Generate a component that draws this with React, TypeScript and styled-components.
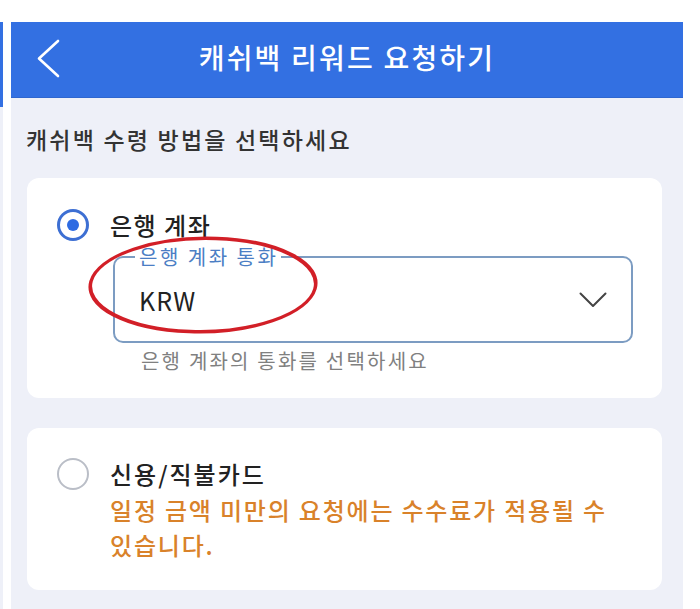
import * as React from "react";
import styled, { createGlobalStyle } from "styled-components";

const GlobalStyle = createGlobalStyle`
  html, body {
    margin: 0;
    padding: 0;
    background: #ffffff;
    overflow: hidden;
  }
  body {
    font-family: "Noto Sans CJK KR", "Noto Sans", sans-serif;
  }
`;

const Page = styled.div`
  display: flex;
  gap: 8px;
  padding-top: 22px;
  height: 609px;
  box-sizing: border-box;
`;

const Strip = styled.div`
  display: flex;
  flex-direction: column;
  width: 3px;
  background: #eef0f8;
`;

const StripTop = styled.div`
  height: 85px;
  background: #3370e2;
`;

const Panel = styled.div`
  display: flex;
  flex-direction: column;
  width: 672px;
  background: #eef0f8;
`;

const Header = styled.header`
  display: grid;
  grid-template-columns: 1fr auto 1fr;
  align-items: center;
  height: 76px;
  padding-bottom: 6px;
  box-sizing: border-box;
  background: #3370e2;
  border-bottom: 1px solid #2f66cf;
`;

const BackButton = styled.div`
  display: flex;
  align-items: center;
  padding-left: 26px;
  padding-top: 4px;
`;

const Title = styled.h1`
  margin: 0;
  color: #ffffff;
  font-size: 28px;
  font-weight: 500;
  line-height: 36px;
  letter-spacing: 2.2px;
`;

const Body = styled.div`
  display: flex;
  flex-direction: column;
  padding: 25px 21px 0 16px;
`;

const Subtitle = styled.div`
  color: #333333;
  font-size: 23px;
  font-weight: 500;
  line-height: 32px;
  letter-spacing: 2.2px;
  margin-bottom: 23px;
  margin-left: -1px;
`;

const Card = styled.div<{ $gap?: number }>`
  position: relative;
  display: grid;
  grid-template-columns: 32px 1fr;
  column-gap: 21px;
  background: #ffffff;
  border-radius: 12px;
  margin-bottom: ${(p) => p.$gap ?? 0}px;
`;

const CardOne = styled(Card)`
  padding: 30px 29px 23px 30px;
`;

const CardTwo = styled(Card)`
  padding: 28px 29px 28px 30px;
`;

const RadioCell = styled.div<{ $row: number }>`
  display: flex;
  align-items: center;
  height: ${(p) => p.$row}px;
`;

const Radio = styled.span<{ $checked?: boolean }>`
  display: flex;
  align-items: center;
  justify-content: center;
  width: 32px;
  height: 32px;
  box-sizing: border-box;
  border-radius: 50%;
  border: ${(p) => (p.$checked ? "3.5px solid #3d6fd3" : "2.5px solid #babec7")};
  &::after {
    content: "";
    display: ${(p) => (p.$checked ? "block" : "none")};
    width: 12px;
    height: 12px;
    border-radius: 50%;
    background: #2e6be2;
  }
`;

const Content = styled.div`
  display: flex;
  flex-direction: column;
`;

const OptionLabel = styled.div<{ $row: number; $spacing: number }>`
  color: #222222;
  font-size: 24px;
  font-weight: 500;
  line-height: ${(p) => p.$row}px;
  letter-spacing: ${(p) => p.$spacing}px;
`;

const Outline = styled.fieldset`
  margin: 3px 0 0 3px;
  padding: 0 24px 25px 20px;
  border: 2px solid #7c9cc2;
  border-radius: 10px;
  min-width: 0;
`;

const Legend = styled.legend`
  padding: 0 3px 0 4px;
  color: #4b7ec4;
  font-size: 20px;
  line-height: 24px;
  letter-spacing: 2.5px;
`;

const SelectRow = styled.div`
  display: flex;
  align-items: center;
  justify-content: space-between;
  padding: 15px 0 0 4px;
`;

const Value = styled.span`
  color: #222222;
  font-size: 25px;
  line-height: 32px;
  letter-spacing: 1px;
`;

const Helper = styled.div`
  margin: 4px 0 0 31px;
  color: #808080;
  font-size: 20px;
  line-height: 28px;
  letter-spacing: 2.2px;
`;

const Warning = styled.div`
  color: #d9822a;
  font-size: 24px;
  font-weight: 500;
  line-height: 35px;
  letter-spacing: 1.8px;
`;

const Annotation = styled.svg`
  position: absolute;
  left: 0;
  top: 0;
  width: 100%;
  height: 100%;
  pointer-events: none;
  overflow: visible;
`;

export default function App() {
  return (
    <>
      <GlobalStyle />
      <Page>
        <Strip>
          <StripTop />
        </Strip>
        <Panel>
          <Header>
            <BackButton>
              <svg width="24" height="40" viewBox="0 0 24 40">
                <polyline
                  points="21,2 2,19.5 21,37"
                  fill="none"
                  stroke="#ffffff"
                  strokeWidth="2.6"
                  strokeLinecap="round"
                  strokeLinejoin="round"
                />
              </svg>
            </BackButton>
            <Title>캐쉬백 리워드 요청하기</Title>
            <div />
          </Header>
          <Body>
            <Subtitle>캐쉬백 수령 방법을 선택하세요</Subtitle>
            <CardOne $gap={30}>
              <RadioCell $row={34}>
                <Radio $checked />
              </RadioCell>
              <Content>
                <OptionLabel $row={34} $spacing={1.5}>
                  은행 계좌
                </OptionLabel>
                <Outline>
                  <Legend>은행 계좌 통화</Legend>
                  <SelectRow>
                    <Value>KRW</Value>
                    <svg width="28" height="16" viewBox="0 0 28 16">
                      <polyline
                        points="1.5,1.5 14,14 26.5,1.5"
                        fill="none"
                        stroke="#444444"
                        strokeWidth="2"
                        strokeLinecap="round"
                        strokeLinejoin="round"
                      />
                    </svg>
                  </SelectRow>
                </Outline>
                <Helper>은행 계좌의 통화를 선택하세요</Helper>
              </Content>
              <Annotation>
                <ellipse
                  cx="0"
                  cy="0"
                  rx="112"
                  ry="47"
                  fill="none"
                  stroke="#d21f27"
                  strokeWidth="3.5"
                  transform="translate(176 107) rotate(2) skewX(-14)"
                />
              </Annotation>
            </CardOne>
            <CardTwo>
              <RadioCell $row={36}>
                <Radio />
              </RadioCell>
              <Content>
                <OptionLabel $row={36} $spacing={2}>
                  신용/직불카드
                </OptionLabel>
                <Warning>일정 금액 미만의 요청에는 수수료가 적용될 수 있습니다.</Warning>
              </Content>
            </CardTwo>
          </Body>
        </Panel>
      </Page>
    </>
  );
}
